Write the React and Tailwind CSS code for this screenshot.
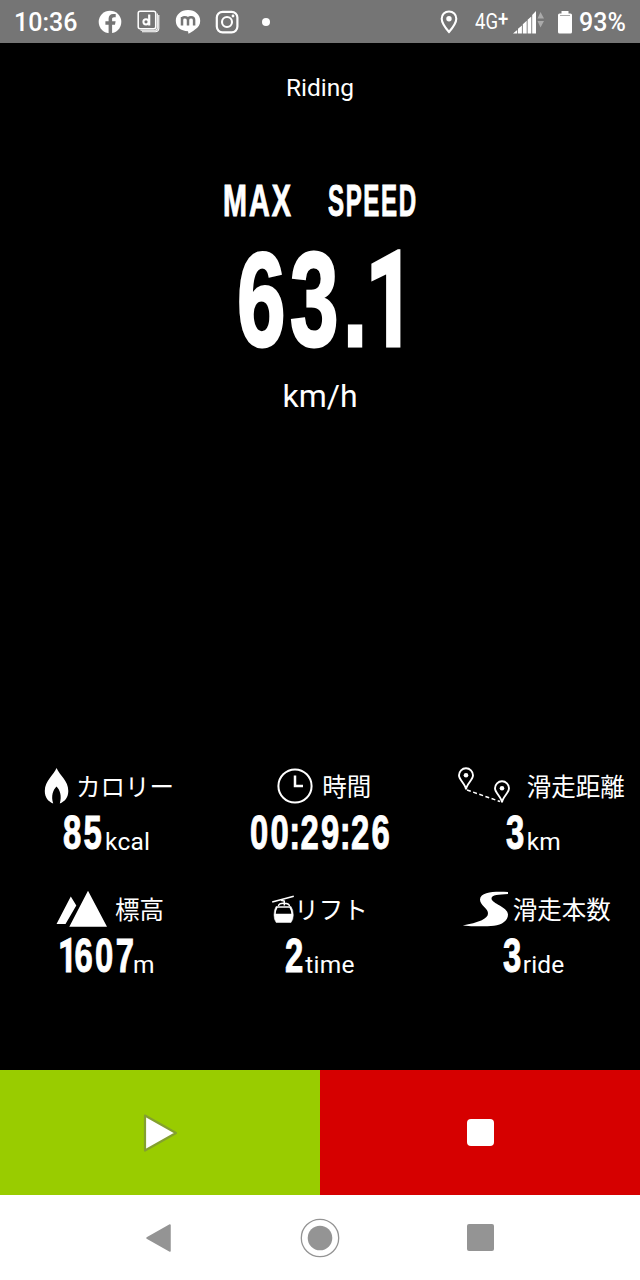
import React from "react";

function Condensed({ children, box, text }) {
  return (
    <span className={`flex shrink-0 ${box}`}>
      <span className={`block origin-left whitespace-pre ${text}`}>{children}</span>
    </span>
  );
}

function StatusBar() {
  return (
    <header className="flex h-[43px] shrink-0 items-center bg-[#757575] text-white">
      <span className="ml-[14px] w-[84px] pt-[2px] text-[25px] leading-none font-medium">10:36</span>
      <svg className="mr-[15px] size-[24px] shrink-0" viewBox="0 0 24 24">
        <circle cx="12" cy="12" r="11.3" fill="white" />
        <path d="M10.6 24v-9.3H7.4v-3.5h3.2V8.6c0-3.1 1.8-4.7 4.5-4.7l2.6.2v3.1h-1.6c-1.5 0-2 .8-2 1.8v2.2h3.5l-.6 3.5h-2.9V24z" fill="#757575" />
      </svg>
      <svg className="mr-[15px] size-[23px] shrink-0" viewBox="0 0 23 23" fill="none" stroke="white">
        <rect x="1.2" y="1.2" width="17.5" height="17.5" rx="2" strokeWidth="1.5" />
        <path d="M20.3 3.5V18a2.3 2.3 0 0 1-2.3 2.3H3.5M21.8 5v13.5a3.3 3.3 0 0 1-3.3 3.3H5" strokeWidth="1.1" />
        <ellipse cx="9" cy="11.8" rx="2.6" ry="2.6" strokeWidth="2" />
        <path d="M12.2 4.5v11" strokeWidth="2.2" />
      </svg>
      <svg className="mr-[14px] h-[25px] w-[26px] shrink-0" viewBox="0 0 26 25">
        <path d="M13 1C5.800 1 .8 5.800 .8 11.800S5.700 22 13 22.300L13.500 24.700C16 24 18 22 20 20.600C23.500 18.500 25.200 15.500 25.200 11.800C25.200 5.800 20.200 1 13 1Z" fill="white" />
        <path d="M7 16.500V8M7 11c0-2 1-2.700 2.600-2.700S13 9.200 13 11v5.500M13 11c0-2 1.300-2.700 3-2.700s3.100.9 3.100 2.700v5.500" fill="none" stroke="#757575" strokeWidth="2.500" />
      </svg>
      <svg className="size-[24px] shrink-0" viewBox="0 0 24 24" fill="none" stroke="white">
        <rect x="1.800" y="1.800" width="20.600" height="20.600" rx="5.800" strokeWidth="2.200" />
        <circle cx="12" cy="12" r="5" strokeWidth="2.100" />
        <circle cx="18" cy="6" r="1.400" fill="white" stroke="none" />
      </svg>
      <span className="ml-[23px] size-[8px] shrink-0 rounded-full bg-white" />
      <svg className="ml-[170px] h-[24px] w-[18px] shrink-0" viewBox="0 0 18 24">
        <path d="M9 1.500C4.800 1.500 1.700 4.600 1.700 8.700C1.700 13.500 9 22 9 22s7.300-8.500 7.300-13.300C16.300 4.600 13.200 1.500 9 1.500Z" fill="none" stroke="white" strokeWidth="2.100" />
        <circle cx="9" cy="8.700" r="2.700" fill="white" />
      </svg>
      <Condensed box="ml-[17px] h-[24px] w-[35px]" text="text-[22px] leading-[24px] scale-x-[0.84]">4G<b className="relative -top-[3px] font-medium">+</b></Condensed>
      <svg className="ml-[3px] h-[24px] w-[32px] shrink-0" viewBox="0 0 32 24">
        <path d="M0 23.500L4.200 20v3.500zM5 18.800L8.900 15.500v8H5zM9.800 14.300L13.700 10.800v12.700H9.800zM14.600 9.700l3.700-3.300v17.100h-3.700zM19.200 5L23 1v22.500h-3.800z" fill="white" />
        <path d="M24.500 8.500L27.500 2l3.500 6.500zM24.500 11h6.500l-3.500 6.500z" fill="#aaa" />
      </svg>
      <svg className="ml-[12px] h-[24px] w-[16px] shrink-0" viewBox="0 0 16 24">
        <path d="M4.500 1h7v2.500h2q1.500 0 1.500 1.500v17q0 1.500-1.500 1.500h-11Q1 23.500 1 22V5q0-1.500 1.500-1.500h2z" fill="white" />
        <path d="M3 5.500h10" stroke="#aaa" strokeWidth="1" />
      </svg>
      <span className="ml-[6px] pt-[2px] text-[25px] leading-none font-medium">93%</span>
    </header>
  );
}

function FlameIcon() {
  return (
    <svg className="h-[38px] w-[25px] shrink-0" viewBox="0 0 25 38" fill="white">
      <path d="M12.500 1C10 8 .8 13.500 .8 24C.8 30.500 4.200 34.500 9.200 36.500C6.800 29 9 23 12.500 19.500C16 23 18 29 15.800 36.500C20.800 34.500 24.300 30.500 24.300 24C24.300 13.500 16 9 12.500 1Z" />
    </svg>
  );
}

function ClockIcon() {
  return (
    <svg className="h-[38px] w-[36px] shrink-0" viewBox="0 0 36 38" fill="none" stroke="white">
      <circle cx="18" cy="19" r="16.600" strokeWidth="2" />
      <path d="M18 8.500v10.500h8" strokeWidth="2.500" />
    </svg>
  );
}

function RouteIcon() {
  return (
    <svg className="h-[38px] w-[54px] shrink-0" viewBox="0 0 54 38" fill="none" stroke="white">
      <path d="M9 22.500C8.500 17 2 13 2 8.300a7 7 0 0 1 14 0C16 13 9.500 17 9 22.500Z" strokeWidth="1.900" />
      <circle cx="9" cy="8.300" r="2.300" fill="white" stroke="none" />
      <path d="M45 35.500C44.500 30 38 26 38 21.300a7 7 0 0 1 14 0C52 26 45.500 30 45 35.500Z" strokeWidth="1.900" />
      <circle cx="45" cy="21.300" r="2.300" fill="white" stroke="none" />
      <path d="M10 23L43 34.500" strokeWidth="1.500" strokeDasharray="4 2.500" />
    </svg>
  );
}

function MountainIcon() {
  return (
    <svg className="h-[38px] w-[52px] shrink-0" viewBox="0 0 52 38" fill="white">
      <path d="M32 .8L51 36.800H13.300zM14.800 6.500L20.300 15.500L9.500 34H.5z" />
    </svg>
  );
}

function GondolaIcon() {
  return (
    <svg className="h-[28px] w-[24px] shrink-0" viewBox="0 0 24 28" fill="none" stroke="white">
      <path d="M1.200 7L22.800 1.200M10 5.200L13.300 6V10.500M7.500 11q0-3 5.500-2.800t5.500 3" strokeWidth="1.500" />
      <path d="M5 11.500h15Q22.300 15 22.300 20q0 5-2.300 7.500H5.200Q3 25 3 20q0-5 2-8.500Z" fill="white" strokeWidth="0.500" />
      <path d="M6.500 12.700h12q1.500 2.500 1.800 6H4.800q.2-3.500 1.700-6Z" fill="black" stroke="none" />
    </svg>
  );
}

function SlopeIcon() {
  return (
    <svg className="h-[38px] w-[48px] shrink-0" viewBox="0 0 48 38" fill="white">
      <path d="M46 2C35 1.500 18.500 1 18 9.500C18 15.500 25.500 17.500 26 23C26.500 29 16 32.500 .8 35.500C12 36.700 24 36.500 32 35.700C40 35 46 30.500 46 24.500C46 17 29.500 13.500 29.500 8.500C29.500 4.800 37 4.500 46 4Z" />
    </svg>
  );
}

function Stat({ icon, label, labelClass, gap, children, valueClass }) {
  return (
    <section className="flex h-[123px] flex-col">
      <div className={`flex h-[42px] items-center ${labelClass}`}>
        {icon}
        <span className={`text-[24.5px] leading-[34px] whitespace-nowrap font-['Noto_Sans_CJK_JP',sans-serif] ${gap}`}>{label}</span>
      </div>
      <div className={`flex h-[50px] items-start ${valueClass}`}>{children}</div>
    </section>
  );
}

const digits = "font-['Liberation_Sans',sans-serif] text-[49px] leading-[51px] font-bold tracking-[3.5px] scale-x-[0.67] [-webkit-text-stroke:1px_white]";

function Colon() {
  return <span className="mr-[-3px] ml-[-3px]">:</span>;
}

function Unit({ children }) {
  return <span className="pt-[21px] text-[24.500px] leading-[28px] tracking-[0.2px]">{children}</span>;
}

export default function App() {
  return (
    <div className="flex h-[1280px] w-[640px] flex-col overflow-hidden bg-black font-['Roboto','Noto_Sans_CJK_JP',sans-serif] text-white">
      <StatusBar />
      <main className="flex h-[1027px] shrink-0 flex-col">
        <h1 className="mt-[30px] text-center text-[24.5px] leading-[30px]">Riding</h1>
        <div className="mt-[69px] flex h-[60px] pl-[223px] font-['Liberation_Sans',sans-serif]">
          <Condensed box="w-[105px]" text="text-[45px] leading-[58px] font-bold tracking-[3px] scale-x-[0.64] [-webkit-text-stroke:1px_white]">MAX</Condensed>
          <Condensed box="w-[90px]" text="text-[45px] leading-[58px] font-bold tracking-[3px] scale-x-[0.535] [-webkit-text-stroke:1px_white]">SPEED</Condensed>
        </div>
        <div className="flex h-[137px] pl-[237px] font-['Liberation_Sans',sans-serif]">
          <Condensed box="w-[170px]" text="text-[134px] leading-[136px] font-bold tracking-[7px] scale-x-[0.65] [-webkit-text-stroke:3px_white]">63.<span className="ml-[-10px] font-['Roboto',sans-serif]">1</span></Condensed>
        </div>
        <p className="mt-[7px] text-center text-[32px] leading-[40px]">km/h</p>
        <div className="mt-[349px] grid grid-cols-3">
          <Stat icon={<FlameIcon />} label="カロリー" labelClass="pl-[44px]" gap="ml-[7px]" valueClass="pl-[63px]">
            <Condensed box="w-[42px]" text={digits}>85</Condensed>
            <Unit>kcal</Unit>
          </Stat>
          <Stat icon={<ClockIcon />} label="時間" labelClass="pl-[64px]" gap="ml-[9px]" valueClass="pl-[37px]">
            <Condensed box="w-[142px]" text={digits}>00<Colon />29<Colon />26</Condensed>
          </Stat>
          <Stat icon={<RouteIcon />} label="滑走距離" labelClass="pl-[30px]" gap="ml-[16px]" valueClass="pl-[79px]">
            <Condensed box="w-[21px]" text={digits}>3</Condensed>
            <Unit>km</Unit>
          </Stat>
          <Stat icon={<MountainIcon />} label="標高" labelClass="pl-[56px]" gap="ml-[7px]" valueClass="pl-[58px]">
            <Condensed box="w-[75px]" text={digits}><span className="mr-[-7px] font-['Roboto',sans-serif]">1</span>607</Condensed>
            <Unit>m</Unit>
          </Stat>
          <Stat icon={<GondolaIcon />} label="リフト" labelClass="pl-[58px]" gap="ml-[-1px]" valueClass="pl-[72px]">
            <Condensed box="w-[20px]" text={digits}>2</Condensed>
            <Unit>time</Unit>
          </Stat>
          <Stat icon={<SlopeIcon />} label="滑走本数" labelClass="pl-[35px]" gap="ml-[3px]" valueClass="pl-[76px]">
            <Condensed box="w-[20px]" text={digits}>3</Condensed>
            <Unit>ride</Unit>
          </Stat>
        </div>
      </main>
      <div className="grid h-[125px] shrink-0 grid-cols-2">
        <button className="flex items-center justify-center bg-[#99cc00]" aria-label="Play">
          <svg className="h-[40px] w-[36px]" viewBox="0 0 36 40">
            <path d="M3 2.500L34 20L3 37.500Z" fill="white" stroke="#84a02f" strokeWidth="2.200" strokeLinejoin="round" />
          </svg>
        </button>
        <button className="flex items-center justify-center bg-[#d60000]" aria-label="Stop">
          <span className="size-[27px] rounded-[4px] bg-white" />
        </button>
      </div>
      <nav className="flex h-[85px] shrink-0 items-center bg-white">
        <svg className="ml-[145px] h-[30px] w-[27px]" viewBox="0 0 27 30">
          <path d="M2 15L25 2V28Z" fill="#949494" stroke="#949494" strokeWidth="1.500" strokeLinejoin="round" />
        </svg>
        <svg className="ml-[128px] size-[40px]" viewBox="0 0 40 40">
          <circle cx="20" cy="20" r="18.700" fill="none" stroke="#949494" strokeWidth="1.300" />
          <circle cx="20" cy="20" r="12.300" fill="#949494" />
        </svg>
        <span className="ml-[127px] size-[27px] rounded-[2px] bg-[#949494]" />
      </nav>
    </div>
  );
}
